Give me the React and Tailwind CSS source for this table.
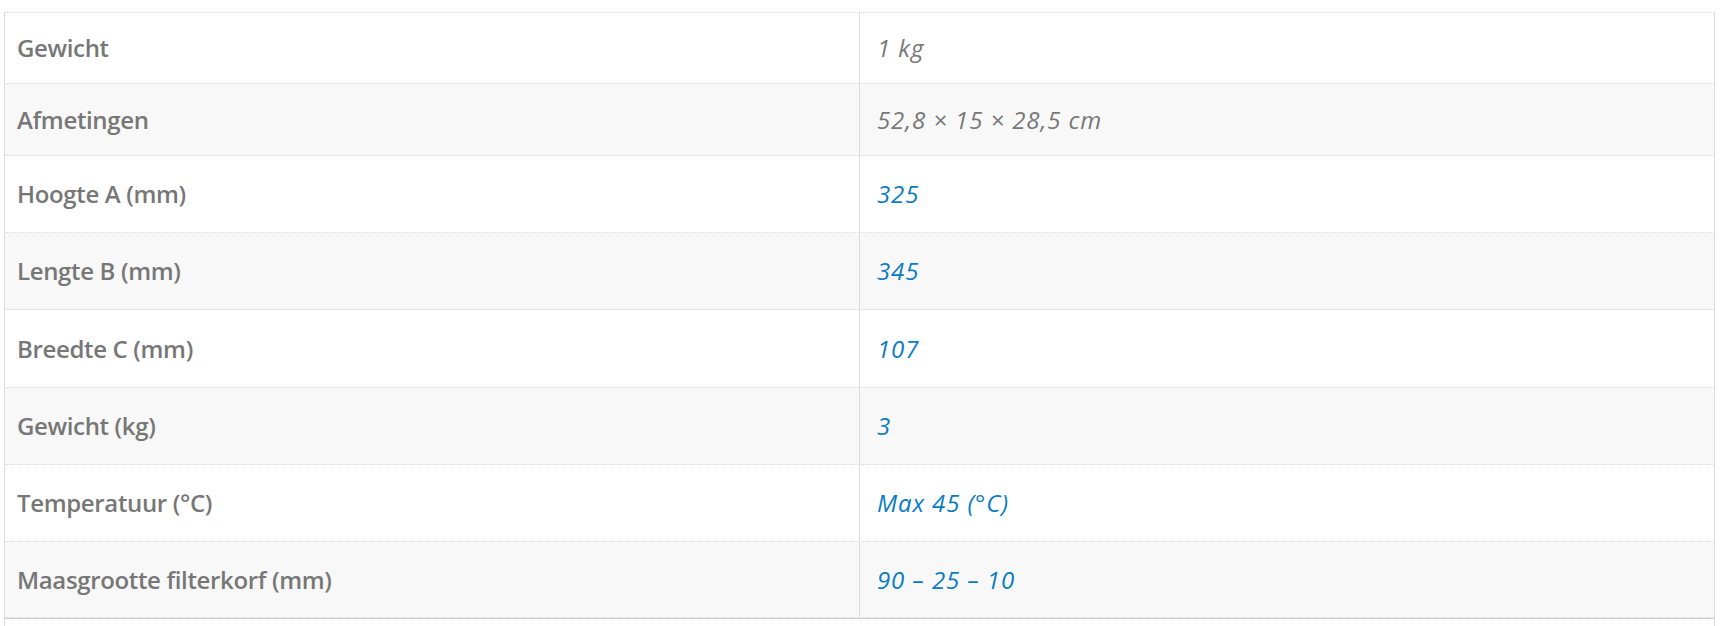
const rows = [
  { label: 'Gewicht', value: '1 kg', h: 'h-[71px]' },
  { label: 'Afmetingen', value: '52,8 × 15 × 28,5 cm', h: 'h-[72px]' },
  { label: 'Hoogte A (mm)', value: '325', link: true, h: 'h-[77px]' },
  { label: 'Lengte B (mm)', value: '345', link: true, h: 'h-[77px]' },
  { label: 'Breedte C (mm)', value: '107', link: true, h: 'h-[78px]' },
  { label: 'Gewicht (kg)', value: '3', link: true, h: 'h-[77px]' },
  { label: 'Temperatuur (°C)', value: 'Max 45 (°C)', link: true, h: 'h-[77px]' },
  { label: 'Maasgrootte filterkorf (mm)', value: '90 – 25 – 10', link: true, h: 'h-[76px]' },
];

export default function App() {
  return (
    <div className="min-h-[626px] bg-white pt-3" style={{ fontFamily: '"Open Sans", "Noto Sans", sans-serif' }}>
      <div className="ml-1 w-[1711px] min-h-[614px] border-x border-[#dcdcdc]">
        <div className="border-t border-dotted border-[#d6d6d6]">
          {rows.map((row, i) => (
            <div
              key={row.label}
              className={`grid grid-cols-[854px_1fr] border-b border-dotted border-[#d6d6d6] ${row.h} ${i % 2 ? 'bg-[#f8f8f8]' : 'bg-white'}`}
            >
              <div className="flex items-center pl-3 text-[24px] font-semibold tracking-[-0.35px] text-[#777777]">
                {row.label}
              </div>
              <div
                className={`flex items-center border-l border-[#dcdcdc] pl-[17px] text-[24px] italic tracking-[0.9px] ${row.link ? 'text-[#0a7cc2]' : 'text-[#787878]'}`}
              >
                {row.value}
              </div>
            </div>
          ))}
        </div>
        <div className="h-px bg-[#d0d0d0]" />
      </div>
    </div>
  );
}
